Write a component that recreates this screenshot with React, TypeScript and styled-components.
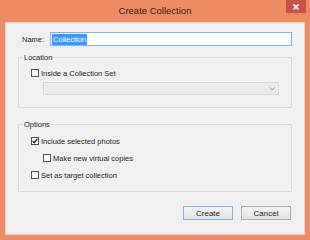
import React from "react";
import styled, { createGlobalStyle } from "styled-components";

const GlobalStyle = createGlobalStyle`
	html, body {
		margin: 0;
		padding: 0;
		background: #ee8b62;
	}
	body {
		font-family: "Liberation Sans", Arial, sans-serif;
	}
`;

const Window = styled.div`
	box-sizing: border-box;
	width: 310px;
	height: 240px;
	display: flex;
	flex-direction: column;
	padding: 0 5px 5px 5px;
	background: #ee8b62;
`;

const TitleBar = styled.div`
	height: 22px;
	flex: none;
	display: grid;
	grid-template-columns: 1fr auto 1fr;
	align-items: center;
`;

const Title = styled.div`
	grid-column: 2;
	font-size: 9.5px;
	color: #2e2420;
	padding-bottom: 2px;
`;

const CloseButton = styled.div`
	grid-column: 3;
	justify-self: end;
	align-self: start;
	margin-right: -1px;
	width: 20px;
	height: 13px;
	background: #c7504b;
	display: flex;
	align-items: center;
	justify-content: center;
`;

const Client = styled.div`
	box-sizing: border-box;
	flex: 1;
	display: flex;
	flex-direction: column;
	background: #f0f0f0;
	border: 1px solid #d8d8d8;
	padding: 9px 12px 0 12px;
	font-size: 7.5px;
	color: #1e1e1e;
`;

const NameRow = styled.div`
	display: flex;
	align-items: center;
	gap: 6px;
	height: 14px;
	padding-left: 4px;
`;

const NameField = styled.div`
	box-sizing: border-box;
	flex: 1;
	height: 14px;
	border: 1px solid #7eb4ea;
	background: #fff;
	display: flex;
	align-items: center;
	padding-left: 1px;
`;

const Selected = styled.span`
	background: #3399ff;
	color: #fff;
	padding: 1px 1px;
	line-height: 9px;
`;

const Group = styled.fieldset<{ $top: number; $bottom: number }>`
	margin: ${p => p.$top}px 0 0 0;
	padding: 0 12px ${p => p.$bottom}px 12px;
	border: 1px solid #dadada;
	border-radius: 1px;
	display: flex;
	flex-direction: column;
	min-width: 0;
`;

const Legend = styled.legend`
	padding: 0 1px;
	margin-left: -8px;
	line-height: 9px;
	font-size: 7.5px;
	color: #1e1e1e;
`;

const CheckRow = styled.label<{ $indent?: boolean; $gap: number }>`
	display: flex;
	align-items: center;
	gap: 2px;
	height: 10px;
	margin-top: ${p => p.$gap}px;
	margin-left: ${p => (p.$indent ? 12 : 0)}px;
`;

const Box = styled.span`
	box-sizing: border-box;
	width: 8px;
	height: 8px;
	border: 1px solid #555;
	background: linear-gradient(#f4f4f4, #ffffff);
	display: flex;
	align-items: center;
	justify-content: center;
`;

const Dropdown = styled.div`
	box-sizing: border-box;
	height: 13px;
	margin: 4px 0 0 12px;
	border: 1px solid #d9d9d9;
	background: #ebebeb;
	display: flex;
	align-items: center;
	justify-content: flex-end;
	padding-right: 3px;
`;

const ButtonRow = styled.div`
	display: flex;
	justify-content: flex-end;
	gap: 8px;
	margin-top: 14px;
	padding-right: 1px;
`;

const Button = styled.div<{ $default?: boolean }>`
	box-sizing: border-box;
	width: 50px;
	height: 14px;
	display: flex;
	align-items: center;
	justify-content: center;
	font-size: 8px;
	border: 1px solid ${p => (p.$default ? "#7eb4ea" : "#adadad")};
	background: linear-gradient(#f2f2f2, #e4e4e4);
	color: #1e1e1e;
`;

const Checkbox: React.FC<{ checked?: boolean }> = ({ checked }) => (
	<Box>
		{checked && (
			<svg width="6" height="6" viewBox="0 0 6 6">
				<path d="M0.7 3.1 L2.3 4.8 L5.3 0.8" fill="none" stroke="#111" strokeWidth="1.3" />
			</svg>
		)}
	</Box>
);

const App: React.FC = () => {
	return (
		<Window>
			<GlobalStyle />
			<TitleBar>
				<Title>Create Collection</Title>
				<CloseButton>
					<svg width="6" height="6" viewBox="0 0 6 6">
						<path d="M0.5 0.5 L5.5 5.5 M5.5 0.5 L0.5 5.5" stroke="#fff" strokeWidth="1.6" />
					</svg>
				</CloseButton>
			</TitleBar>
			<Client>
				<NameRow>
					<span>Name:</span>
					<NameField>
						<Selected>Collection</Selected>
					</NameField>
				</NameRow>
				<Group $top={7} $bottom={12}>
					<Legend>Location</Legend>
					<CheckRow $gap={6}>
						<Checkbox />
						<span>Inside a Collection Set</span>
					</CheckRow>
					<Dropdown>
						<svg width="6" height="4" viewBox="0 0 6 4">
							<path d="M0.5 0.5 L3 3 L5.5 0.5" fill="none" stroke="#9a9a9a" strokeWidth="1" />
						</svg>
					</Dropdown>
				</Group>
				<Group $top={12} $bottom={11}>
					<Legend>Options</Legend>
					<CheckRow $gap={7}>
						<Checkbox checked />
						<span>Include selected photos</span>
					</CheckRow>
					<CheckRow $gap={7} $indent>
						<Checkbox />
						<span>Make new virtual copies</span>
					</CheckRow>
					<CheckRow $gap={7}>
						<Checkbox />
						<span>Set as target collection</span>
					</CheckRow>
				</Group>
				<ButtonRow>
					<Button $default>Create</Button>
					<Button>Cancel</Button>
				</ButtonRow>
			</Client>
		</Window>
	);
};

export default App;
